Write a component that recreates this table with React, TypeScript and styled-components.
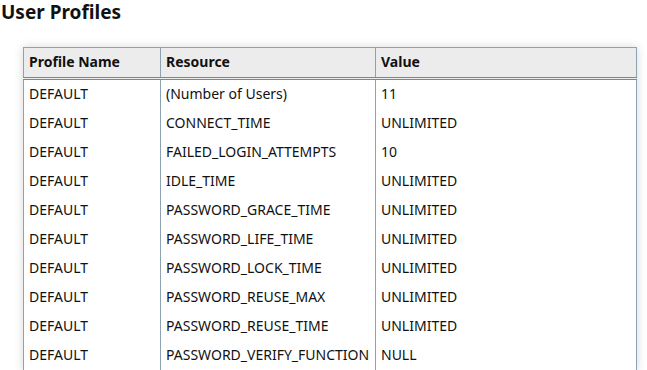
import React from "react";
import styled, { createGlobalStyle } from "styled-components";

const Global = createGlobalStyle`
  html, body { margin: 0; padding: 0; background: #ffffff; }
  body { font-family: "Noto Sans", "Open Sans", sans-serif; color: #111; }
`;

const Page = styled.div`
  padding: 0 0 0 1px;
`;

const Title = styled.h2`
  margin: 0;
  padding-top: 0;
  font-size: 19px;
  line-height: 24px;
  font-weight: 700;
  color: #111;
`;

const Table = styled.table`
  margin: 23px 0 0 22px;
  width: 614px;
  border-collapse: collapse;
  table-layout: fixed;
  border: 1px solid #8ea3b2;
  box-shadow: 0 0 9px rgba(0, 0, 0, 0.16);
  font-size: 14px;
  line-height: 19px;
`;

const Col = styled.col<{ $w?: number }>`
  width: ${(p) => (p.$w ? `${p.$w}px` : "auto")};
`;

const HeadCell = styled.th`
  text-align: left;
  font-weight: 700;
  background: #ececec;
  padding: 4px 5px 6px 5px;
  border-left: 1px solid #8ea3b2;
  border-right: 1px solid #8ea3b2;
  border-bottom: 3px double #858585;
  white-space: nowrap;
`;

const Cell = styled.td`
  padding: 4px 5px 6px 5px;
  border-left: 1px solid #8ea3b2;
  border-right: 1px solid #8ea3b2;
  white-space: nowrap;
  overflow: hidden;
`;

const rows: [string, string, string][] = [
  ["DEFAULT", "(Number of Users)", "11"],
  ["DEFAULT", "CONNECT_TIME", "UNLIMITED"],
  ["DEFAULT", "FAILED_LOGIN_ATTEMPTS", "10"],
  ["DEFAULT", "IDLE_TIME", "UNLIMITED"],
  ["DEFAULT", "PASSWORD_GRACE_TIME", "UNLIMITED"],
  ["DEFAULT", "PASSWORD_LIFE_TIME", "UNLIMITED"],
  ["DEFAULT", "PASSWORD_LOCK_TIME", "UNLIMITED"],
  ["DEFAULT", "PASSWORD_REUSE_MAX", "UNLIMITED"],
  ["DEFAULT", "PASSWORD_REUSE_TIME", "UNLIMITED"],
  ["DEFAULT", "PASSWORD_VERIFY_FUNCTION", "NULL"],
];

export default function App() {
  return (
    <Page>
      <Global />
      <Title>User Profiles</Title>
      <Table>
        <colgroup>
          <Col $w={137} />
          <Col $w={215} />
          <Col />
        </colgroup>
        <thead>
          <tr>
            <HeadCell>Profile Name</HeadCell>
            <HeadCell>Resource</HeadCell>
            <HeadCell>Value</HeadCell>
          </tr>
        </thead>
        <tbody>
          {rows.map((r, i) => (
            <tr key={i}>
              <Cell>{r[0]}</Cell>
              <Cell>{r[1]}</Cell>
              <Cell>{r[2]}</Cell>
            </tr>
          ))}
        </tbody>
      </Table>
    </Page>
  );
}
